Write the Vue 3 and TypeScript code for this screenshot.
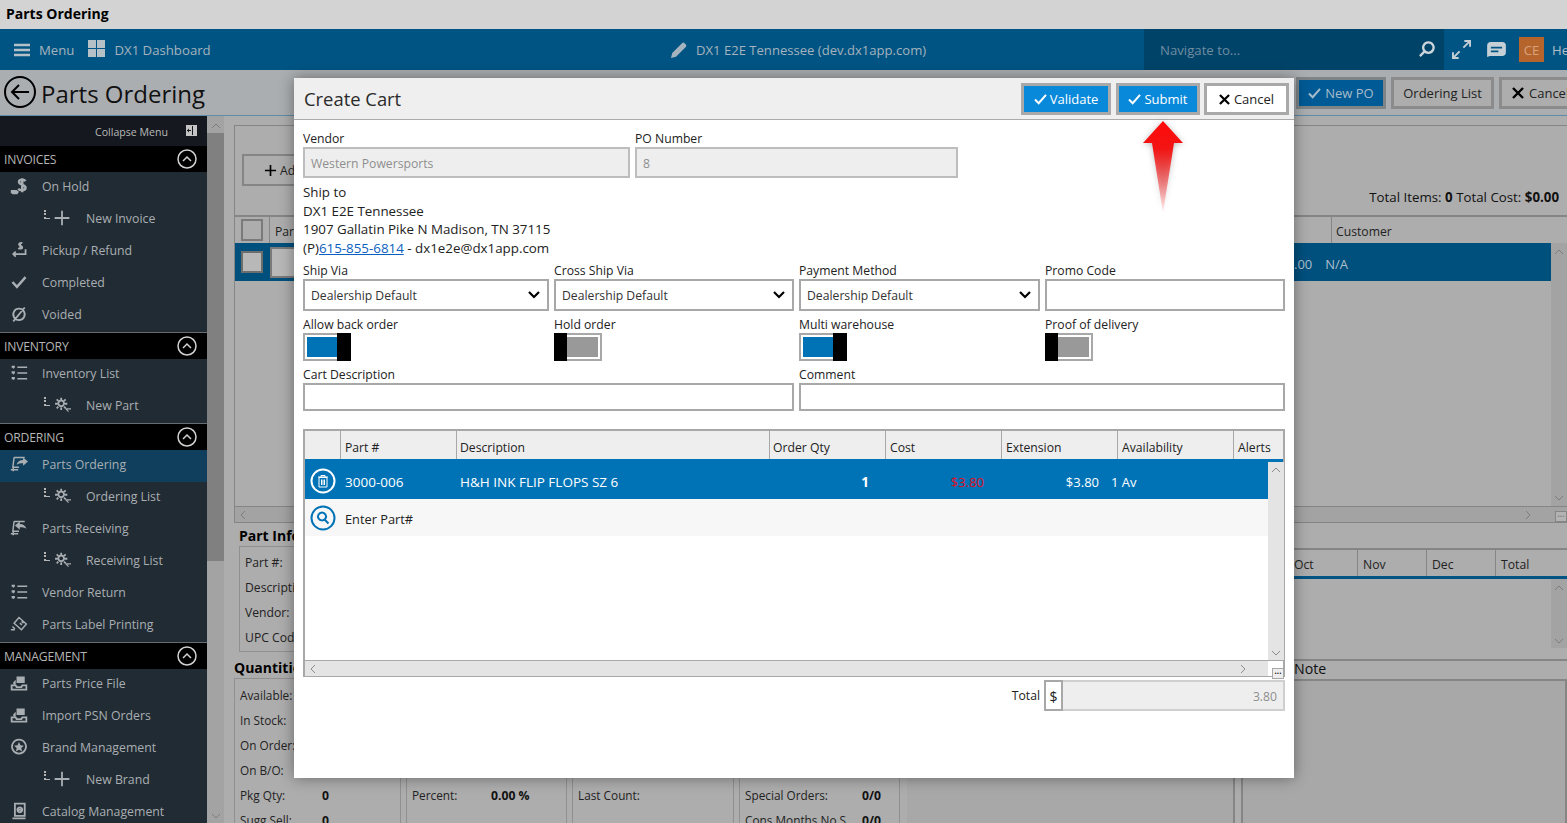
<script setup lang="ts">
interface NavItem { label: string; icon: string; sub?: boolean; active?: boolean }
interface NavSection { title: string; items: NavItem[] }

const icons: Record<string, string> = {
  hold: 'M19 5c-1.500-2-8-2.500-8 1.200s8 3 8 6.800-6.500 3.800-9 1.500M15 1.500v17',
  plus: 'M11 2v18M2 11h18',
  pickup: 'M15 3c-1-1-4-.5-4 1.300s4 1.700 4 3.500-3 2-5 1M12.500 1.500v9M19 10v6H4M7 13l-3 3 3 3',
  check: 'M3 11l5.500 6L19 5',
  voided: 'M11 4.500a7 7 0 1 0 .01 0zM4 20L18 3',
  list: 'M9 4h12M9 11h12M9 18h12',
  gear: 'M10 5.500a3.500 3.500 0 1 0 .01 0zM10 2v3M10 14v3M2.500 9.500h3M14.500 9.500h3M4.500 4l2 2M13.500 13l2 2M15.500 4l-2 2M6.500 13l-2 2',
  order: 'M5 3h13M5 3L3.500 15H11M1 18h9M4 15v5',
  receive: 'M5 3h13M5 3L3.500 15H11M1 18h9M4 15v5',
  label: 'M11 3l9 8-6 7-9-8zM14 8l2.500 2M12 10l2.500 2M3 14l3 3M1 18h5',
  upload: 'M2 14h5l1 2h6l1-2h5v5H2z',
  brand: 'M11 2a8.500 8.500 0 1 1-.01 0z',
  catalog: 'M6 2h12v15H6zM3 20h16M12 6.500a3 3 0 1 0 .01 0zM9 9.500h6'
}

const solids: Record<string, string> = {
  hold: 'M1 16h7l3 2-2 3H3l-1-1H1z',
  list: 'M2 2h4v2.500H5L4 6 3 4.500H2zM2 9h4v2.500H5L4 13l-1-1.500H2zM2 16h4v2.500H5L4 20l-1-1.500H2z',
  gear: 'M15 15h7v1.500h-4.500l2 2-1 1-3.500-3.500z',
  order: 'M8 12c1-4 4-6 8-6V3l6 5-6 5v-3c-3 0-6 0-8 2z',
  receive: 'M20 12c-1-4-4-6-8-6V3L6 8l6 5v-3c3 0 6 0 8 2z',
  upload: 'M8 3h10v8H8zM4 10l3-3v6H4z',
  brand: 'M11 5l1.800 4 4.200.4-3.200 2.900 1 4.200-3.800-2.200-3.800 2.200 1-4.200L5 9.400 9.200 9z'
}

const sections: NavSection[] = [
  { title: 'INVOICES', items: [
    { label: 'On Hold', icon: 'hold' },
    { label: 'New Invoice', icon: 'plus', sub: true },
    { label: 'Pickup / Refund', icon: 'pickup' },
    { label: 'Completed', icon: 'check' },
    { label: 'Voided', icon: 'voided' }
  ] },
  { title: 'INVENTORY', items: [
    { label: 'Inventory List', icon: 'list' },
    { label: 'New Part', icon: 'gear', sub: true }
  ] },
  { title: 'ORDERING', items: [
    { label: 'Parts Ordering', icon: 'order', active: true },
    { label: 'Ordering List', icon: 'gear', sub: true },
    { label: 'Parts Receiving', icon: 'receive' },
    { label: 'Receiving List', icon: 'gear', sub: true },
    { label: 'Vendor Return', icon: 'list' },
    { label: 'Parts Label Printing', icon: 'label' }
  ] },
  { title: 'MANAGEMENT', items: [
    { label: 'Parts Price File', icon: 'upload' },
    { label: 'Import PSN Orders', icon: 'upload' },
    { label: 'Brand Management', icon: 'brand' },
    { label: 'New Brand', icon: 'plus', sub: true },
    { label: 'Catalog Management', icon: 'catalog' }
  ] }
]

const partInfo: string[] = ['Part #:', 'Description:', 'Vendor:', 'UPC Code:']

const quantities: { label: string; value: string }[][] = [
  [
    { label: 'Available:', value: '' },
    { label: 'In Stock:', value: '' },
    { label: 'On Order:', value: '' },
    { label: 'On B/O:', value: '' },
    { label: 'Pkg Qty:', value: '0' },
    { label: 'Sugg Sell:', value: '0' }
  ],
  [{ label: 'Percent:', value: '0.00 %' }],
  [{ label: 'Last Count:', value: '' }],
  [
    { label: 'Special Orders:', value: '0/0' },
    { label: 'Cons Months No S...', value: '0/0' }
  ]
]

const months: string[] = ['Oct', 'Nov', 'Dec', 'Total']
const gridColumns: string[] = ['', 'Part #', 'Description', 'Order Qty', 'Cost', 'Extension', 'Availability', 'Alerts']

const selects = ['Ship Via', 'Cross Ship Via', 'Payment Method']
const toggles: { label: string; on: boolean }[] = [
  { label: 'Allow back order', on: true },
  { label: 'Hold order', on: false },
  { label: 'Multi warehouse', on: true },
  { label: 'Proof of delivery', on: false }
]
</script>

<template>
  <div class="app">
    <div class="titlebar">Parts Ordering</div>

    <header class="nav">
      <div class="nav-left">
        <svg class="ic-menu" viewBox="0 0 16 14"><path d="M0 2h16M0 7h16M0 12h16" /></svg>
        <span>Menu</span>
        <svg class="ic-dash" viewBox="0 0 17 17"><path d="M0 0h8v8H0zM9 0h8v8H9zM0 9h8v8H0zM9 9h8v8H9z" /></svg>
        <span>DX1 Dashboard</span>
      </div>
      <div class="nav-center">
        <svg class="ic-pencil" viewBox="0 0 16 16"><path d="M0 16l1.200-5L11 1.200c.8-.8 1.800-.8 2.500 0l1.300 1.300c.7.7.7 1.700 0 2.500L5 14.800z" /></svg>
        <span>DX1 E2E Tennessee (dev.dx1app.com)</span>
      </div>
      <div class="nav-search">
        <span>Navigate to...</span>
        <svg class="ic-search" viewBox="0 0 18 18"><path d="M11 1.500a5.500 5.500 0 1 0 .01 0zM7 11l-5 5" /></svg>
      </div>
      <div class="nav-tools">
        <svg class="ic-expand" viewBox="0 0 20 20"><path d="M12 8l6-6M13 1h6v6M8 12l-6 6M1 13v6h6" /></svg>
        <svg class="ic-chat" viewBox="0 0 20 16"><path d="M4 0h12a4 4 0 0 1 4 4v7a4 4 0 0 1-4 4H3l-3 1V4a4 4 0 0 1 4-4zM4 5v2h12V5zM4 9v2h8V9z" fill-rule="evenodd" /></svg>
        <span class="avatar">CE</span>
        <span class="user">Help</span>
      </div>
    </header>

    <div class="pagehead">
      <svg class="ic-back" viewBox="0 0 32 32"><circle cx="16" cy="16" r="15" /><path d="M25 16H8M15 9l-7 7 7 7" /></svg>
      <h1>Parts Ordering</h1>
      <div class="page-tools">
        <button class="bg-btn primary"><svg class="ic-check" viewBox="0 0 14 12"><path d="M1 6l4 4 8-9" /></svg>New PO</button>
        <button class="bg-btn list-btn">Ordering List</button>
        <button class="bg-btn cancel-btn"><svg class="ic-x" viewBox="0 0 12 12"><path d="M1 1l10 10M11 1L1 11" /></svg>Cancel</button>
      </div>
    </div>

    <div class="workspace">
      <aside class="sidebar">
        <div class="collapse">
          <span>Collapse Menu</span>
          <svg viewBox="0 0 11 11"><path d="M0 0h11v11H0z" fill="#c4c4c4" /><path d="M6 1h1v9H6zM1 5h4v1H1zM3 3.500v4L1 5.500z" fill="#15191f" /></svg>
        </div>
        <section v-for="section in sections" :key="section.title" class="nav-section">
          <div class="section-head">
            <span>{{ section.title }}</span>
            <svg viewBox="0 0 20 20"><circle cx="10" cy="10" r="9" /><path d="M6 12l4-4 4 4" /></svg>
          </div>
          <div
            v-for="item in section.items"
            :key="item.label"
            class="nav-row"
            :class="{ sub: item.sub, active: item.active }"
          >
            <span v-if="item.sub" class="elbow"></span>
            <svg class="nav-icon" :class="'icon-' + item.icon" viewBox="0 0 22 22">
              <path :d="icons[item.icon]" />
              <path v-if="solids[item.icon]" :d="solids[item.icon]" class="solid" />
            </svg>
            <span>{{ item.label }}</span>
          </div>
        </section>
      </aside>

      <div class="side-scroll">
        <svg viewBox="0 0 10 6"><path d="M1 5l4-4 4 4" /></svg>
        <div class="side-thumb"></div>
        <svg class="down" viewBox="0 0 10 6"><path d="M1 1l4 4 4-4" /></svg>
      </div>

      <main class="content">
        <div class="top-panel">
          <div class="top-bar">
            <button class="add-btn"><svg class="ic-plus" viewBox="0 0 14 14"><path d="M7 1v12M1 7h12" /></svg>Add</button>
            <div class="totals">Total Items: <b>0</b> Total Cost: <b>$0.00</b></div>
          </div>
          <div class="bg-grid-head">
            <span class="bg-check-cell"><i class="bg-check"></i></span>
            <span class="bg-col-part">Part #</span>
            <span class="bg-col-customer">Customer</span>
          </div>
          <div class="bg-grid-row">
            <i class="bg-check"></i>
            <i class="bg-row-btn"></i>
            <span class="bg-amount">.00</span>
            <span class="bg-na">N/A</span>
            <div class="bg-row-scroll"><svg viewBox="0 0 10 6"><path d="M1 5l4-4 4 4" /></svg></div>
          </div>
          <div class="bg-grid-body">
            <div class="bg-body-scroll"><svg viewBox="0 0 10 6"><path d="M1 1l4 4 4-4" /></svg></div>
          </div>
          <div class="bg-hscroll">
            <svg class="h-left" viewBox="0 0 6 10"><path d="M5 1L1 5l4 4" /></svg>
            <svg class="h-right" viewBox="0 0 6 10"><path d="M1 1l4 4-4 4" /></svg>
            <span class="bg-dots">...</span>
          </div>
        </div>

        <div class="lower">
          <div class="lower-left">
            <h3 class="part-title">Part Info</h3>
            <div class="part-box">
              <div v-for="label in partInfo" :key="label" class="part-row">{{ label }}</div>
            </div>
            <h3 class="qty-title">Quantities</h3>
            <div class="qty-grid">
              <div v-for="(col, i) in quantities" :key="i" class="qty-col" :class="'qty-col-' + i">
                <div v-for="row in col" :key="row.label" class="qty-row">
                  <span class="qty-label">{{ row.label }}</span>
                  <b>{{ row.value }}</b>
                </div>
              </div>
            </div>
          </div>

          <div class="lower-right">
            <div class="month-head">
              <span v-for="m in months" :key="m" class="month">{{ m }}</span>
            </div>
            <div class="month-body">
              <div class="month-scroll">
                <svg viewBox="0 0 10 6"><path d="M1 5l4-4 4 4" /></svg>
                <svg viewBox="0 0 10 6"><path d="M1 1l4 4 4-4" /></svg>
              </div>
            </div>
            <div class="note-label">Note</div>
            <div class="note-row">
              <div class="mid-box"></div>
              <div class="note-box"></div>
            </div>
          </div>
        </div>
      </main>
    </div>

    <div class="modal">
      <div class="modal-head">
        <h2>Create Cart</h2>
        <div class="modal-actions">
          <button class="btn blue validate"><svg class="ic-check" viewBox="0 0 14 12"><path d="M1 6l4 4 8-9" /></svg>Validate</button>
          <button class="btn blue submit"><svg class="ic-check" viewBox="0 0 14 12"><path d="M1 6l4 4 8-9" /></svg>Submit</button>
          <button class="btn cancel"><svg class="ic-x" viewBox="0 0 12 12"><path d="M1 1l10 10M11 1L1 11" /></svg>Cancel</button>
        </div>
      </div>

      <div class="modal-body">
        <div class="vendor-row">
          <label class="field">
            <span class="lbl">Vendor</span>
            <span class="input disabled">Western Powersports</span>
          </label>
          <label class="field">
            <span class="lbl">PO Number</span>
            <span class="input disabled">8</span>
          </label>
        </div>

        <div class="shipto">
          <div>Ship to</div>
          <div>DX1 E2E Tennessee</div>
          <div>1907 Gallatin Pike N Madison, TN 37115</div>
          <div>(P)<a>615-855-6814</a> - dx1e2e@dx1app.com</div>
        </div>

        <div class="form-grid ship-row">
          <div v-for="s in selects" :key="s" class="field">
            <span class="lbl">{{ s }}</span>
            <div class="input select">
              <span>Dealership Default</span>
              <svg viewBox="0 0 12 8"><path d="M1 1l5 5 5-5" /></svg>
            </div>
          </div>
          <div class="field">
            <span class="lbl">Promo Code</span>
            <div class="input select"></div>
          </div>
        </div>

        <div class="form-grid toggle-row">
          <div v-for="t in toggles" :key="t.label" class="field">
            <span class="lbl tight">{{ t.label }}</span>
            <div class="toggle" :class="t.on ? 'on' : 'off'">
              <i class="knob"></i>
              <i class="fill"></i>
            </div>
          </div>
        </div>

        <div class="form-grid desc-row">
          <div class="field span2">
            <span class="lbl tight">Cart Description</span>
            <div class="input short"></div>
          </div>
          <div class="field span2">
            <span class="lbl tight">Comment</span>
            <div class="input short"></div>
          </div>
        </div>

        <div class="grid">
          <div class="grid-head">
            <span v-for="(c, i) in gridColumns" :key="i" class="head-cell">{{ c }}</span>
          </div>
          <div class="grid-body">
            <div class="rows">
              <div class="row selected">
                <span class="row-icon">
                  <svg viewBox="0 0 26 26" class="round white">
                    <circle cx="13" cy="13" r="11.500" />
                    <path d="M8 9h10M11 9V7.500h4V9M9 9.500h8V19H9zM11.500 11.500v5.500M13 11.500v5.500M14.500 11.500v5.500" class="thin" />
                  </svg>
                </span>
                <span class="cell-part">3000-006</span>
                <span class="cell-desc">H&amp;H INK FLIP FLOPS SZ 6</span>
                <b class="cell-qty">1</b>
                <span class="cell-cost">$3.80</span>
                <span class="cell-ext">$3.80</span>
                <span class="cell-av">1 Av</span>
              </div>
              <div class="row entry">
                <span class="row-icon">
                  <svg viewBox="0 0 26 26" class="round blue-ic">
                    <circle cx="13" cy="13" r="11.500" />
                    <path d="M12 7.500a4 4 0 1 0 .01 0zM15 15l3.500 3.500" class="mid" />
                  </svg>
                </span>
                <span class="cell-part">Enter Part#</span>
              </div>
            </div>
            <div class="v-scroll">
              <svg viewBox="0 0 10 6"><path d="M1 5l4-4 4 4" /></svg>
              <svg viewBox="0 0 10 6"><path d="M1 1l4 4 4-4" /></svg>
            </div>
          </div>
          <div class="grid-foot">
            <div class="h-scroll">
              <svg viewBox="0 0 6 10"><path d="M5 1L1 5l4 4" /></svg>
              <svg viewBox="0 0 6 10"><path d="M1 1l4 4-4 4" /></svg>
            </div>
            <div class="corner"><span class="dots">...</span></div>
          </div>
        </div>

        <div class="total-row">
          <span class="total-label">Total</span>
          <span class="addon">$</span>
          <span class="total-input">3.80</span>
        </div>
      </div>
    </div>

    <svg class="arrow" viewBox="0 0 60 110" aria-hidden="true">
      <defs>
        <linearGradient id="arrowFill" x1="0" y1="0" x2="0" y2="1">
          <stop offset="0" stop-color="#ff0a0a" />
          <stop offset="0.3" stop-color="#f31414" />
          <stop offset="1" stop-color="#f31414" stop-opacity="0.05" />
        </linearGradient>
      </defs>
      <path d="M30 4L50 26H41L30 96 19 26H10z" fill="url(#arrowFill)" />
    </svg>
  </div>
</template>

<style>
html, body { margin: 0; padding: 0; overflow: hidden; background: #adadad; }
</style>

<style scoped>
* { box-sizing: border-box; }
.app {
  position: relative;
  width: 1567px;
  height: 823px;
  overflow: hidden;
  display: flex;
  flex-direction: column;
  font-family: "Open Sans", "Noto Sans", "Liberation Sans", sans-serif;
  font-size: 12.2px;
  color: #222;
  background: #adadad;
}
svg { display: block; flex: none; fill: none; stroke: currentColor; }
button { font: inherit; cursor: default; }
h1, h2, h3 { margin: 0; font-weight: 400; }

.titlebar {
  height: 29px;
  flex: none;
  background: #d3d3d3;
  color: #000;
  font-size: 14px;
  font-weight: 700;
  line-height: 27px;
  padding-left: 6px;
}

.nav {
  height: 41px;
  flex: none;
  background: #005483;
  color: #a4b3bd;
  font-size: 13.2px;
  display: flex;
  align-items: stretch;
}
.nav-left { width: 671px; display: flex; align-items: center; padding-left: 14px; }
.ic-menu { width: 16px; height: 14px; stroke: #b6c0c7; stroke-width: 2.500; margin-right: 9px; }
.ic-dash { width: 17px; height: 17px; fill: #b6c0c7; stroke: none; margin: -2px 9px 0 14px; }
.nav-center { width: 473px; display: flex; align-items: center; gap: 9px; font-size: 13.090px; }
.ic-pencil { width: 16px; height: 16px; fill: #a4b3bd; stroke: none; }
.nav-search {
  width: 300px;
  background: #004369;
  display: flex;
  align-items: center;
  justify-content: space-between;
  padding: 0 9px 0 16px;
  color: #6e8da1;
}
.ic-search { width: 17px; height: 17px; stroke: #ccd4da; stroke-width: 2.500; }
.nav-tools { display: flex; align-items: center; padding-left: 8px; color: #b3bec6; flex: 1; overflow: hidden; }
.ic-expand { width: 19px; height: 19px; stroke: #c5cfd6; stroke-width: 2; }
.ic-chat { width: 19px; height: 15px; fill: #c5cfd6; stroke: none; margin-left: 16px; }
.avatar {
  width: 25px;
  height: 25px;
  background: #b5652c;
  color: #d8a27c;
  display: flex;
  align-items: center;
  justify-content: center;
  margin-left: 13px;
  flex: none;
}
.user { margin-left: 8px; }

.pagehead {
  height: 46px;
  flex: none;
  background: #abaeb1;
  border-bottom: 1px solid #5e8ba6;
  display: flex;
  align-items: center;
  padding-left: 4px;
}
.ic-back { width: 32px; height: 32px; stroke: #000; stroke-width: 2; margin-top: -2px; }
.pagehead h1 { flex: 1; font-size: 24px; color: #111; margin: 2px 0 0 5px; }
.page-tools { width: 271px; flex: none; display: flex; gap: 5px; margin-top: 1px; overflow: hidden; }
.bg-btn {
  flex: none;
  height: 32px;
  border: 3px solid #8b8b8b;
  background: #adadad;
  color: #222;
  display: flex;
  align-items: center;
  justify-content: center;
  gap: 3px;
  padding: 0;
  font-size: 13px;
}
.bg-btn.primary { width: 90px; background: #005a95; border-color: #7f8487; color: #a7bccb; }
.bg-btn.primary .ic-check { stroke: #a7bccb; }
.list-btn { width: 103px; }
.cancel-btn { width: 90px; padding-left: 10px; justify-content: flex-start; }
.ic-check { width: 13px; height: 11px; stroke: #fff; stroke-width: 2.200; margin-right: 1px; }
.ic-x { width: 11px; height: 11px; stroke: #000; stroke-width: 2.400; margin-right: 2px; }
.cancel-btn .ic-x { width: 12px; height: 12px; }

.workspace { flex: 1; min-height: 0; display: flex; }
.sidebar { width: 207px; flex: none; background: #212b33; color: #a9aeb2; overflow: hidden; font-size: 12.300px; }
.collapse {
  height: 30px;
  background: #15191f;
  display: flex;
  align-items: center;
  justify-content: flex-end;
  gap: 18px;
  padding: 1px 10px 0 0;
  font-size: 10.600px;
  color: #b8b8b8;
}
.collapse svg { width: 11px; height: 11px; stroke: none; margin-top: -2px; }
.nav-section + .nav-section { border-top: 1px solid #666c70; }
.section-head {
  height: 26px;
  background: #000;
  color: #b5b5b5;
  display: flex;
  align-items: center;
  justify-content: space-between;
  padding: 0 10px 0 4px;
  font-size: 12.200px;
  letter-spacing: -.2px;
}
.section-head svg { width: 20px; height: 20px; stroke: #d2d2d2; stroke-width: 1.500; }
.nav-row { height: 32px; display: flex; align-items: center; padding: 0 0 4px 10px; }
.nav-row.active { background: #0f3f5c; }
.nav-row.sub { padding-left: 44px; }
.nav-icon { width: 18px; height: 18px; margin-right: 14px; stroke: #a9aeb2; stroke-width: 2.200; }
.nav-icon .solid { fill: #a9aeb2; stroke: none; }
.icon-hold, .icon-check { stroke-width: 3; }
.icon-order, .icon-receive, .icon-label, .icon-list { stroke-width: 1.800; }
.nav-row.sub .nav-icon { margin: 0 15px 0 3px; }
.elbow {
  width: 6px;
  height: 9px;
  border-left: 2px dotted #b5b5b5;
  border-bottom: 1px solid #b5b5b5;
  margin-top: -7px;
  flex: none;
}

.side-scroll {
  width: 17px;
  flex: none;
  background: #a3a3a3;
  display: flex;
  flex-direction: column;
  align-items: center;
  color: #7c7c7c;
  padding-top: 7px;
}
.side-scroll svg { width: 10px; height: 6px; }
.side-thumb { width: 17px; height: 428px; background: #808080; margin-top: 4px; }
.side-scroll .down { margin-top: auto; margin-bottom: 4px; }

.content { flex: 1; min-width: 0; padding: 9px 0 0 10px; display: flex; flex-direction: column; overflow: hidden; }
.top-panel {
  height: 398px;
  flex: none;
  border: 1px solid #858585;
  border-right: 0;
  display: flex;
  flex-direction: column;
}
.top-bar { height: 89px; flex: none; display: flex; align-items: flex-start; justify-content: space-between; padding: 28px 8px 0 7px; }
.add-btn {
  width: 90px;
  height: 32px;
  border: 2px solid #858585;
  background: #adadad;
  display: flex;
  align-items: center;
  padding: 0 0 0 20px;
  gap: 3px;
  color: #222;
}
.ic-plus { width: 13px; height: 13px; stroke: #000; stroke-width: 1.800; }
.totals { margin-top: 34px; font-size: 13.300px; color: #111; }
.bg-grid-head {
  height: 28px;
  flex: none;
  border-top: 2px solid #858585;
  display: flex;
  align-items: center;
  position: relative;
}
.bg-check-cell { width: 35px; height: 100%; border-right: 1px solid #858585; display: flex; align-items: center; justify-content: center; }
.bg-check { width: 22px; height: 22px; border: 2px solid #7a7a7a; background: #adadad; display: block; flex: none; }
.bg-col-part { padding-left: 5px; width: 1062px; border-right: 1px solid #858585; height: 100%; line-height: 30px; }
.bg-col-customer { padding-left: 4px; line-height: 30px; height: 100%; }
.bg-grid-row {
  height: 38px;
  flex: none;
  background: #00507e;
  display: flex;
  align-items: center;
  padding-left: 6px;
  color: #adbfcc;
  font-size: 13px;
}
.bg-grid-row .bg-check { background: #b8b8b8; border-color: #6d6d6d; }
.bg-row-btn { width: 30px; height: 31px; margin-left: 7px; background: #b8b8b8; border: 2px solid #7a7a7a; display: block; flex: none; }
.bg-amount { margin: 3px 0 0 994px; }
.bg-na { margin: 3px 0 0 13px; }
.bg-row-scroll { margin-left: auto; width: 16px; height: 38px; background: #a3a3a3; color: #7c7c7c; padding: 6px 3px; }
.bg-grid-body { flex: 1; display: flex; justify-content: flex-end; background: #adadad; }
.bg-body-scroll { width: 16px; background: #a3a3a3; color: #7c7c7c; display: flex; flex-direction: column; justify-content: flex-end; align-items: center; padding-bottom: 5px; }
.bg-row-scroll svg, .bg-body-scroll svg, .month-scroll svg { width: 10px; height: 6px; }
.bg-hscroll {
  height: 16px;
  flex: none;
  background: #a3a3a3;
  border-top: 1px solid #858585;
  color: #7c7c7c;
  display: flex;
  align-items: center;
  padding-left: 5px;
}
.bg-hscroll svg { width: 6px; height: 10px; }
.h-right { margin-left: auto; margin-right: 24px; }
.bg-dots { width: 12px; height: 11px; border: 1px solid #858585; background: #b3b3b3; font-size: 8px; font-weight: 700; line-height: 3px; text-align: center; align-self: flex-end; }

.lower { flex: 1; min-height: 0; display: flex; gap: 7px; }
.lower-left { width: 666px; flex: none; }
.part-title { font-size: 14px; font-weight: 700; color: #000; margin: 4px 0 0 5px; height: 19px; line-height: 18px; }
.part-box { margin-left: 5px; height: 106px; border: 1px solid #909090; padding: 3px 0 0 5px; }
.part-row { height: 25px; line-height: 25px; }
.qty-title { font-size: 14px; font-weight: 700; color: #000; height: 26px; line-height: 32px; }
.qty-grid { display: grid; grid-template-columns: 167px 161px 162px 161px; gap: 5px; height: 200px; }
.qty-col { border: 1px solid #909090; padding: 4px 0 0 5px; }
.qty-col-1, .qty-col-2, .qty-col-3 { padding-top: 104px; }
.qty-row { height: 25px; display: flex; align-items: center; line-height: 25px; }
.qty-label { width: 82px; flex: none; white-space: nowrap; font-size: 11.800px; }
.qty-col-1 .qty-label { width: 79px; }
.qty-col-3 .qty-label { width: 117px; overflow: hidden; }
.qty-row b { color: #111; }
.lower-right { flex: 1; min-width: 0; display: flex; flex-direction: column; padding-top: 25px; }
.month-head { height: 31px; flex: none; border-top: 2px solid #858585; border-bottom: 3px solid #005483; display: flex; padding-left: 383px; }
.month { width: 69px; border-left: 1px solid #858585; padding-left: 5px; line-height: 29px; }
.month:first-child { width: 67px; border-left: 0; padding-left: 4px; }
.month-body { height: 82px; flex: none; border-bottom: 2px solid #858585; display: flex; justify-content: flex-end; padding-bottom: 11px; }
.month-scroll { width: 16px; background: #a3a3a3; color: #7c7c7c; display: flex; flex-direction: column; justify-content: space-between; align-items: center; padding: 6px 0 4px; }
.note-label { height: 18px; font-size: 14.200px; line-height: 16px; padding-left: 387px; color: #111; flex: none; }
.note-row { flex: 1; display: flex; gap: 6px; }
.mid-box { width: 328px; border-right: 2px solid #858585; border-top: 2px solid #858585; background: #a8a8a8; }
.note-box { flex: 1; border: 2px solid #858585; border-bottom: 0; background: #a8a8a8; }

.modal {
  position: absolute;
  left: 294px;
  top: 78px;
  width: 1000px;
  height: 700px;
  background: #fff;
  box-shadow: 0 0 14px rgba(0, 0, 0, .4);
  display: flex;
  flex-direction: column;
}
.modal-head {
  height: 42px;
  flex: none;
  background: #efefef;
  border-bottom: 1px solid #ababab;
  display: flex;
  align-items: center;
  justify-content: space-between;
  padding: 0 5px 0 10px;
}
.modal-head h2 { font-size: 18.400px; color: #2a2a2a; }
.modal-actions { display: flex; gap: 5px; margin-top: 1px; }
.btn {
  height: 32px;
  border: 3px solid #a9a9a9;
  display: flex;
  align-items: center;
  justify-content: center;
  gap: 2px;
  padding: 0;
  font-size: 13px;
}
.btn.blue { background: #0989da; color: #fff; }
.validate { width: 90px; }
.submit { width: 84px; }
.cancel { width: 85px; background: #fff; color: #222; margin-left: -1px; }

.modal-body { flex: 1; display: flex; flex-direction: column; padding: 10px 9px 0; }
.field { display: flex; flex-direction: column; }
.lbl { height: 17px; line-height: 17px; color: #222; }
.lbl.tight { height: 16px; line-height: 16px; }
.input {
  border: 2px solid #a8a8a8;
  background: #fff;
  display: flex;
  align-items: center;
  padding: 0 6px;
  height: 32px;
  color: #333;
}
.input.short { height: 28px; }
.input.disabled { height: 31px; background: #eee; border-color: #bdbdbd; color: #8e8e8e; padding-top: 2px; }
.vendor-row { display: flex; gap: 5px; flex: none; }
.vendor-row .field:first-child { width: 327px; }
.vendor-row .field:last-child { width: 323px; }
.shipto { margin-top: 5px; line-height: 18.600px; flex: none; height: 79px; color: #222; font-size: 13.350px; }
.shipto a { color: #0b5fc0; text-decoration: underline; }
.form-grid { display: grid; grid-template-columns: 246px 240px 241px 240px; column-gap: 5px; flex: none; }
.span2 { grid-column: span 2; }
.select { justify-content: space-between; }
.select svg { width: 12px; height: 8px; stroke: #000; stroke-width: 2.200; margin: -1px 1px 0 0; }
.toggle-row { margin-top: 6px; }
.desc-row { margin-top: 6px; }
.toggle {
  width: 48px;
  height: 28px;
  border: 2px solid #a8a8a8;
  padding: 2px;
  display: flex;
}
.fill { flex: 1; display: block; }
.knob { width: 14px; background: #000; display: block; margin: -4px 0; flex: none; }
.on .fill { background: #0073b7; }
.on .knob { order: 2; margin-right: -4px; }
.off .fill { background: #999; }
.off .knob { margin-left: -4px; width: 13px; }

.grid {
  margin-top: 18px;
  height: 248px;
  flex: none;
  border: 2px solid #a8a8a8;
  border-bottom-width: 1px;
  display: flex;
  flex-direction: column;
}
.grid-head {
  height: 31px;
  flex: none;
  background: #eee;
  border-bottom: 3px solid #0073b7;
  display: grid;
  grid-template-columns: 36px 116px 313px 116px 116px 116px 116px 49px;
}
.head-cell { border-right: 1px solid #a8a8a8; padding: 7px 0 0 4px; line-height: 20px; }
.head-cell:last-child { border-right: 0; }
.head-cell:nth-child(3), .head-cell:nth-child(4) { padding-left: 3px; }
.grid-body { flex: 1; min-height: 0; display: flex; }
.rows { flex: 1; min-width: 0; }
.row {
  height: 37px;
  display: grid;
  grid-template-columns: 36px 116px 313px 116px 116px 116px auto;
  align-items: center;
}
.row.selected { background: #0073b7; color: #fff; font-size: 13.500px; padding-top: 2px; }
.row.entry { background: #f7f7f7; color: #222; font-size: 12.800px; grid-template-columns: 36px 1fr; padding-top: 2px; }
.row-icon { display: flex; padding-left: 5px; }
.row.selected .row-icon { margin-top: -2px; }
.row.entry .row-icon { margin-top: -2px; }
.round { width: 26px; height: 26px; stroke-width: 2; }
.round.white { stroke: #fff; }
.round.blue-ic { stroke: #0073b7; }
.round .thin { stroke-width: 1; }
.round .mid { stroke-width: 2; }
.cell-part { padding-left: 4px; }
.cell-desc { padding-left: 3px; }
.cell-qty { text-align: right; padding-right: 17px; }
.cell-cost { text-align: right; padding-right: 18px; color: #e00d1f; font-size: 13px; }
.cell-ext { text-align: right; padding-right: 19px; font-size: 13px; }
.cell-av { margin-left: -7px; font-size: 13px; }
.v-scroll {
  width: 16px;
  flex: none;
  margin-right: -1px;
  background: #e4e4e4;
  color: #8c8c8c;
  display: flex;
  flex-direction: column;
  justify-content: space-between;
  align-items: center;
  padding: 5px 0 4px;
}
.v-scroll svg { width: 10px; height: 6px; }
.grid-foot { height: 16px; flex: none; display: flex; border-top: 1px solid #a8a8a8; }
.h-scroll {
  flex: 1;
  background: #e4e4e4;
  color: #8c8c8c;
  display: flex;
  align-items: center;
  justify-content: space-between;
  padding: 0 22px 0 5px;
}
.h-scroll svg { width: 6px; height: 10px; }
.corner { width: 15px; background: #fff; position: relative; }
.dots {
  position: absolute;
  right: -1px;
  bottom: -3px;
  width: 12px;
  height: 11px;
  border: 1px solid #a8a8a8;
  background: #eee;
  color: #222;
  font-size: 8px;
  font-weight: 700;
  line-height: 3px;
  text-align: center;
}

.total-row { margin-top: 3px; height: 31px; flex: none; display: flex; align-items: stretch; justify-content: flex-end; }
.total-label { margin-right: 4px; line-height: 31px; }
.addon { width: 19px; border: 2px solid #a8a8a8; font-size: 14px; line-height: 29px; text-align: center; flex: none; }
.total-input {
  width: 222px;
  background: #eee;
  border: 2px solid #cfcfcf;
  border-left: 0;
  color: #8e8e8e;
  text-align: right;
  padding-right: 6px;
  line-height: 30px;
}

.arrow {
  position: absolute;
  left: 1133px;
  top: 117px;
  width: 60px;
  height: 110px;
  stroke: none;
  filter: drop-shadow(0 1px 3px rgba(0, 0, 0, .28));
}
</style>
